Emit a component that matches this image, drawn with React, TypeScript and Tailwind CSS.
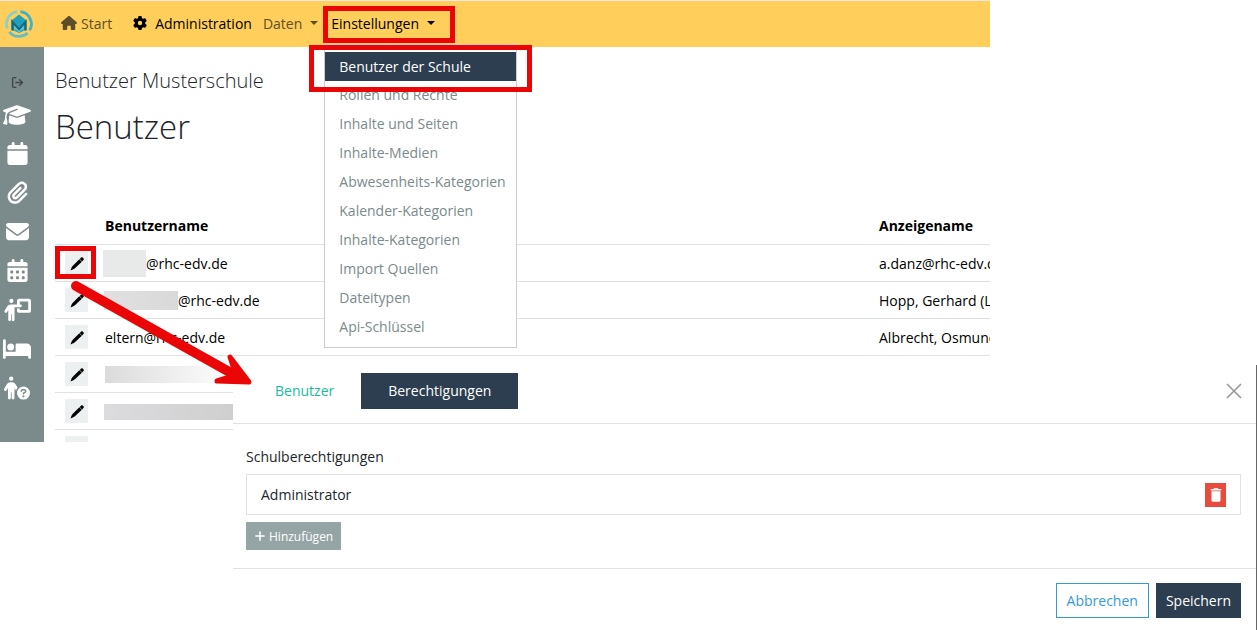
import React from 'react';
import { FaBed, FaCalendar, FaCalendarDays, FaEnvelope, FaGear, FaGraduationCap, FaHouse, FaPaperclip, FaPersonChalkboard, FaPersonCircleQuestion, FaPlus } from 'react-icons/fa6';
import { FiLogOut } from 'react-icons/fi';
import { MdDelete } from 'react-icons/md';

const SIDEBAR_ITEMS = [
  { label: 'Schule', icon: <FaGraduationCap size={28} /> },
  { label: 'Kalender', icon: <FaCalendar size={23} /> },
  { label: 'Dateien', icon: <FaPaperclip size={23} /> },
  { label: 'Nachrichten', icon: <FaEnvelope size={23} /> },
  { label: 'Termine', icon: <FaCalendarDays size={23} /> },
  { label: 'Unterricht', icon: <FaPersonChalkboard size={28} /> },
  { label: 'Abwesenheit', icon: <FaBed size={28} /> },
  { label: 'Hilfe', icon: <FaPersonCircleQuestion size={26} /> },
];

const MENU_ITEMS = [
  'Benutzer der Schule',
  'Rollen und Rechte',
  'Inhalte und Seiten',
  'Inhalte-Medien',
  'Abwesenheits-Kategorien',
  'Kalender-Kategorien',
  'Inhalte-Kategorien',
  'Import Quellen',
  'Dateitypen',
  'Api-Schlüssel',
];

const USERS = [
  { mask: '-ml-[2px] w-[43px] h-[27px] bg-[#e8eaea]', name: '@rhc-edv.de', display: 'a.danz@rhc-edv.de' },
  { mask: '-ml-px w-[74px] h-[19px] bg-linear-to-r from-[#e2e0e1] to-[#d9d9d9]', name: '@rhc-edv.de', display: 'Hopp, Gerhard (Lehrer)' },
  { mask: '', name: 'eltern@rhc-edv.de', display: 'Albrecht, Osmund' },
  { mask: 'w-[130px] h-[17px] bg-linear-to-r from-[#dbdbdc] to-white', name: '', display: '' },
  { mask: '-ml-px w-[131px] h-[16px] bg-linear-to-r from-[#dcdbde] to-[#cfcfcf]', name: '', display: '' },
  { mask: '', name: '', display: '' },
];

function Logo() {
  return (
    <svg viewBox="0 0 28 28" className="size-7" fill="none">
      <g strokeWidth="2.8">
        <path d="M2.4 18.6A12.4 12.4 0 0 1 12.4 1.7" stroke="#8fd0c4" />
        <path d="M15.4 1.7A12.4 12.4 0 0 1 24.6 20.4" stroke="#3fb3c3" />
        <path d="M4.4 21.8A12.4 12.4 0 0 0 22.6 23" stroke="#62bdc6" />
      </g>
      <path d="M14 4.5 21.5 10.5v9L14 23l-7.500-3.500v-9Z" fill="#1f9fb9" />
      <path d="M7.5 20.5V12L14 19.500 20.5 12v8.500" stroke="#14697e" strokeWidth="2.2" />
      <path d="M9.8 20.500v-3.500l4.200 5 4.200-5v3.500" stroke="#6cc6d0" strokeWidth="1.2" />
    </svg>
  );
}

function Pencil() {
  return (
    <svg viewBox="0 0 14 14" className="size-[14px]" fill="currentColor">
      <path d="M11 .7c.5-.5 1.3-.5 1.8 0l.6.6c.5.5.5 1.3 0 1.8L12.1 4.4 9.7 2Z" />
      <path d="M9.3 2.3 11.8 4.8 5.2 11.1 3.8 12.1.5 13.5l1.3-3.4 1-1.3Z" />
    </svg>
  );
}

function Caret() {
  return <span className="border-x-4 border-t-4 border-x-transparent border-t-current" />;
}

function Sidebar() {
  return (
    <nav className="w-11 shrink-0 bg-[#7b8a8b] text-white">
      <button aria-label="Abmelden" className="flex h-12 w-[34px] items-end justify-center pb-[6px] text-[#3f4747]">
        <FiLogOut size={13} strokeWidth={2.5} />
      </button>
      {SIDEBAR_ITEMS.map((item) => (
        <button key={item.label} aria-label={item.label} className="flex h-[39px] w-[34px] items-center justify-center">
          {item.icon}
        </button>
      ))}
    </nav>
  );
}

function SettingsMenu() {
  return (
    <div className="absolute left-[-7px] top-[43px] z-10 w-[193px] border border-[#cccccc] bg-white pt-[7px] pb-[5px]">
      {MENU_ITEMS.map((item, i) => (
        <a
          key={item}
          href="#"
          className={i === 0 ? 'block h-[29px] bg-[#2c3e50] pl-[14px] leading-[29px] whitespace-nowrap text-white' : 'block h-[29px] pl-[14px] leading-[28px] whitespace-nowrap text-[#7b8a8b]'}
        >
          {item}
        </a>
      ))}
      <div className="pointer-events-none absolute -left-4 top-0 h-[47px] w-[223px] border-5 border-[#ea0606]" />
    </div>
  );
}

function Header() {
  return (
    <header className="flex h-[47px] items-center border-t border-[#e8e8e8] bg-[#ffce5b]">
      <a href="#" aria-label="Startseite" className="ml-[5px]"><Logo /></a>
      <nav className="flex h-full items-center pb-[2px] text-[#5e4e28]">
        <a href="#" className="ml-7 flex items-center gap-1"><FaHouse size={16} />Start</a>
        <a href="#" className="ml-[21px] flex items-center gap-2 text-black"><FaGear size={14} />Administration</a>
        <button className="ml-[11px] flex items-center gap-2">Daten <Caret /></button>
        <div className="relative ml-[13px] h-full text-black">
          <button className="flex h-full items-center gap-2">Einstellungen <Caret /></button>
          <div className="pointer-events-none absolute -left-2 top-[5px] h-[37px] w-[132px] border-5 border-[#ea0606]" />
          <SettingsMenu />
        </div>
      </nav>
    </header>
  );
}

function UserTable() {
  return (
    <table className="mt-[59px] w-full table-fixed text-left whitespace-nowrap text-black">
      <thead>
        <tr className="h-[37px] border-b border-[#dee2e6]">
          <th aria-label="Bearbeiten" className="w-[50px]" />
          <th className="font-bold">Benutzername</th>
          <th className="w-[111px] font-bold">Anzeigename</th>
        </tr>
      </thead>
      <tbody>
        {USERS.map((user, i) => (
          <tr key={i} className="h-[37px] border-b border-[#dee2e6]">
            <td>
              <div className="relative ml-[10px] w-[23px]">
                <button aria-label="Bearbeiten" className="flex h-6 w-full items-center justify-center bg-[#ecf0f1] pt-[2px]">
                  <Pencil />
                </button>
                {i === 0 && <div className="pointer-events-none absolute -left-[10px] -top-[5px] h-[33px] w-[41px] border-5 border-[#ea0606]" />}
              </div>
            </td>
            <td className="pt-[2px]">
              <div className="flex items-center">
                {user.mask && <span className={user.mask} />}
                {user.name}
              </div>
            </td>
            <td className="overflow-hidden pt-[2px]">{user.display}</td>
          </tr>
        ))}
      </tbody>
    </table>
  );
}

function PermissionDialog() {
  return (
    <section role="dialog" aria-label="Berechtigungen" className="relative -mt-[77px] ml-[233px] border-r border-[#666666] bg-white text-[#212529]">
      <div className="flex h-[59px] items-center border-b border-[#dee2e6] pr-[14px] pb-[7px] pl-[15px]">
        <button className="h-9 px-[27px] text-[#18bc9c]">Benutzer</button>
        <button className="h-9 bg-[#2c3e50] px-[27px] text-white">Berechtigungen</button>
        <button aria-label="Schließen" className="ml-auto text-[#999999]">
          <svg viewBox="0 0 16 16" className="size-4" stroke="currentColor" strokeWidth="1.7">
            <path d="m1 1 14 14M15 1 1 15" />
          </svg>
        </button>
      </div>
      <div className="h-[145px] border-b border-[#dee2e6] pt-[22px] pr-[15px] pl-[13px]">
        <h3>Schulberechtigungen</h3>
        <div className="mt-[7px] flex h-[41px] items-center justify-between border border-[#dee2e6] px-[14px]">
          Administrator
          <button aria-label="Löschen" className="flex h-6 w-[21px] items-center justify-center bg-[#e74c3c] text-white"><MdDelete size={18} /></button>
        </div>
        <button className="mt-[7px] flex h-7 items-center gap-[3px] bg-[#95a5a6] px-2 text-[12px] text-white"><FaPlus size={12} />Hinzufügen</button>
      </div>
      <div className="flex justify-end gap-[7px] px-[15px] py-[14px]">
        <button className="h-[35px] border border-[#3498db] px-[10px] text-[#3498db]">Abbrechen</button>
        <button className="h-[35px] bg-[#2c3e50] px-[10px] text-white">Speichern</button>
      </div>
    </section>
  );
}

export default function App() {
  return (
    <main className="relative bg-white font-['Open_Sans',sans-serif] text-[14px] leading-[21px]">
      <div className="mr-[267px]">
        <Header />
        <div className="flex h-[395px] overflow-hidden">
          <Sidebar />
          <div className="min-w-0 flex-1 pt-[21px] pl-[11px]">
            <h2 className="text-[20px] leading-[26px] font-light text-[#212529]">Benutzer Musterschule</h2>
            <h1 className="mt-3 text-[33px] leading-[42px] font-light text-[#212529]">Benutzer</h1>
            <UserTable />
          </div>
        </div>
      </div>
      <PermissionDialog />
      <svg viewBox="0 0 190 114" className="pointer-events-none absolute top-[277px] left-[66px] w-[190px]" fill="none" stroke="#ea0606" strokeLinecap="round" strokeLinejoin="round">
        <path d="M10 9 167 97" strokeWidth="10" />
        <path d="M164 80 183 105 151 104 170 98Z" fill="#ea0606" strokeWidth="5" />
      </svg>
    </main>
  );
}
